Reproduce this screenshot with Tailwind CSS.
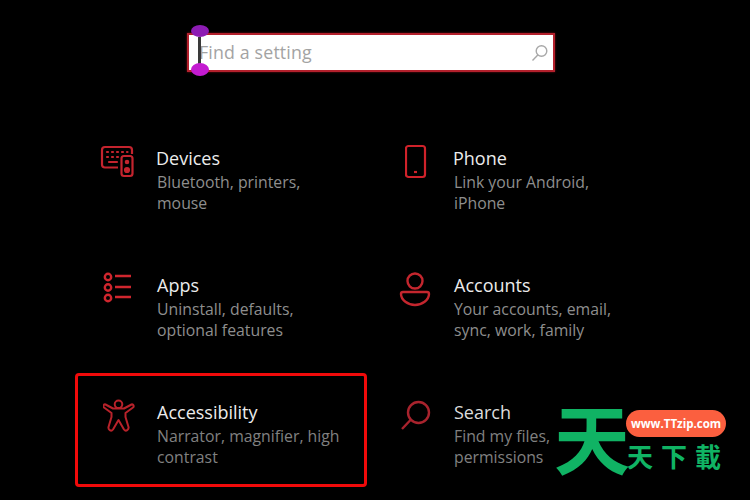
<!DOCTYPE html>
<html><head><meta charset="utf-8"><script src="https://cdn.jsdelivr.net/npm/@tailwindcss/browser@4"></script></head>
<body class="m-0 bg-black">
<div class="relative w-[750px] h-[500px] overflow-hidden bg-black font-['Open_Sans','Noto_Sans',sans-serif]">
  <!-- search -->
  <div class="pt-[33px] pl-[187px]">
    <div class="relative flex items-center justify-between w-[368px] h-[39px] bg-white border-2 border-[#b3202c] pl-[10px] pr-[3px] shadow-[0_0_2px_#7a1018]">
      <span class="text-[17.8px] leading-none text-[#a3a3a3] tracking-[0.15px]">Find a setting</span>
      <svg class="w-[20px] h-[20px]" viewBox="0 0 20 20" fill="none" stroke="#a8a8a8" stroke-width="1.4"><circle cx="11.5" cy="8" r="5.3"/><path d="M7.8 12 2.5 17.5"/></svg>
      <span class="absolute left-[9px] top-[2px] w-[3px] h-[31px] bg-[#3a3a3a]"></span>
      <span class="absolute left-[2px] -top-[10px] w-[18px] h-[12px] rounded-[50%] bg-[#8d1cb4]"></span>
      <span class="absolute left-[2px] top-[28px] w-[18px] h-[13px] rounded-[50%] bg-[#c31bd0]"></span>
    </div>
  </div>
  <!-- grid -->
  <div class="grid grid-cols-[292px_292px] grid-rows-[114px_114px_114px] gap-x-[5px] gap-y-[13px] pl-[75px] pt-[47px]">
    <!-- Devices -->
    <div class="flex border-[3px] border-transparent pl-[22px] pt-[22px]">
      <svg class="w-[36px] h-[36px] shrink-0" viewBox="0 0 36 36" fill="none" stroke="#c4242e" stroke-width="2.2"><path d="M18 23.5H5a3 3 0 0 1-3-3V6a3 3 0 0 1 3-3h24a3 3 0 0 1 3 3v4"/><rect x="21.5" y="12" width="11" height="20" rx="2.5"/><circle cx="27" cy="18" r="1.2" fill="#c4242e"/><circle cx="27" cy="26" r="2" fill="#c4242e"/><path d="M7 8h1M12 8h1M17 8h1M22 8h1M27 8h.5M7 13h1M12 13h1M17 13h1M9 18h8" stroke-linecap="round"/></svg>
      <div class="ml-[20px] mt-[1px]">
        <div class="text-[18px] leading-[27px] text-[#ececec]">Devices</div>
        <div class="text-[15.8px] leading-[21px] text-[#8e8e8e] pl-[1px] w-[180px]">Bluetooth, printers, mouse</div>
      </div>
    </div>
    <!-- Phone -->
    <div class="flex border-[3px] border-transparent pl-[30px] pt-[22px]">
      <svg class="w-[36px] h-[36px] shrink-0" viewBox="0 0 36 36" fill="none" stroke="#d0222a" stroke-width="2.2"><rect x="1" y="2" width="19" height="31" rx="2.5"/><path d="M9 28h3"/></svg>
      <div class="ml-[12px] mt-[1px]">
        <div class="text-[18px] leading-[27px] text-[#ececec]">Phone</div>
        <div class="text-[15.8px] leading-[21px] text-[#8e8e8e] pl-[1px] w-[170px]">Link your Android, iPhone</div>
      </div>
    </div>
    <!-- Apps -->
    <div class="flex border-[3px] border-transparent pl-[22px] pt-[22px]">
      <svg class="w-[36px] h-[36px] shrink-0" viewBox="0 0 36 36" fill="none" stroke="#d0262e" stroke-width="2.4"><circle cx="8" cy="6" r="3.2"/><circle cx="8" cy="16.5" r="3.2"/><circle cx="8" cy="27" r="3.2"/><path d="M15 5h16M15 16h16M15 26h16"/></svg>
      <div class="ml-[21px] mt-[1px]">
        <div class="text-[18px] leading-[27px] text-[#ececec]">Apps</div>
        <div class="text-[15.8px] leading-[21px] text-[#8e8e8e] w-[180px]">Uninstall, defaults, optional features</div>
      </div>
    </div>
    <!-- Accounts -->
    <div class="flex border-[3px] border-transparent pl-[22px] pt-[22px]">
      <svg class="w-[36px] h-[36px] shrink-0" viewBox="0 0 36 36" fill="none" stroke="#c4262e" stroke-width="2.4"><circle cx="18" cy="10" r="7.500"/><path d="M6 21h24a2 2 0 0 1 2 2C32 29 25 34 18 34S4 29 4 23a2 2 0 0 1 2-2Z"/></svg>
      <div class="ml-[21px] mt-[1px]">
        <div class="text-[18px] leading-[27px] text-[#ececec]">Accounts</div>
        <div class="text-[15.8px] leading-[21px] text-[#8e8e8e] w-[170px]">Your accounts, email, sync, work, family</div>
      </div>
    </div>
    <!-- Accessibility -->
    <div class="flex border-[3px] border-[#f00a0a] rounded-[4px] pl-[25px] pt-[22px]">
      <svg class="w-[32px] h-[36px] shrink-0" viewBox="0 0 32 36" fill="none" stroke="#b8222a" stroke-width="2" stroke-linejoin="round"><circle cx="15.500" cy="6.300" r="3.800"/><path d="M2.500 6.500 10 10.500h11l7.500-4c1.500-.8 3 2 1.500 3L22.500 15v4l3 10c.6 2.500-2.500 5-4.500 2.500L15.500 22 10 31.500c-2 2.500-5 0-4.500-2.500l3-10v-4L1 9.500c-1.500-1 0-3.800 1.500-3Z"/></svg>
      <div class="ml-[22px] mt-[1px]">
        <div class="text-[18px] leading-[27px] text-[#ececec]">Accessibility</div>
        <div class="text-[15.8px] leading-[21px] text-[#808080] w-[195px]">Narrator, magnifier, high contrast</div>
      </div>
    </div>
    <!-- Search -->
    <div class="flex border-[3px] border-transparent pl-[25px] pt-[24px]">
      <svg class="w-[36px] h-[36px] shrink-0" viewBox="0 0 36 36" fill="none" stroke="#a8232d" stroke-width="2.4"><circle cx="18.500" cy="12.500" r="10.500"/><path d="M10.500 20 2 29"/></svg>
      <div class="ml-[18px] -mt-[1px]">
        <div class="text-[18px] leading-[27px] text-[#dcdcdc]">Search</div>
        <div class="text-[15.800px] leading-[21px] text-[#808080] w-[110px]">Find my files, permissions</div>
      </div>
    </div>
  </div>
  <!-- watermark -->
  <div class="absolute left-[554px] top-[396px] w-[190px] h-[84px] font-['Noto_Sans_CJK_SC',sans-serif]">
    <span class="absolute left-[0px] top-[-4px] text-[76px] leading-[88px] font-bold text-[#10b364]">天</span>
    <span class="absolute left-[72px] top-[14px] w-[100px] h-[27px] rounded-full bg-[#fb5f3f] text-center text-[11.5px] leading-[27px] font-bold text-white font-['Open_Sans',sans-serif]">www.TTzip.com</span>
    <span class="absolute left-[73px] top-[42px] text-[26px] leading-[36px] tracking-[8px] font-bold text-[#10b364] whitespace-nowrap">天下載</span>
  </div>
</div>
</body></html>
